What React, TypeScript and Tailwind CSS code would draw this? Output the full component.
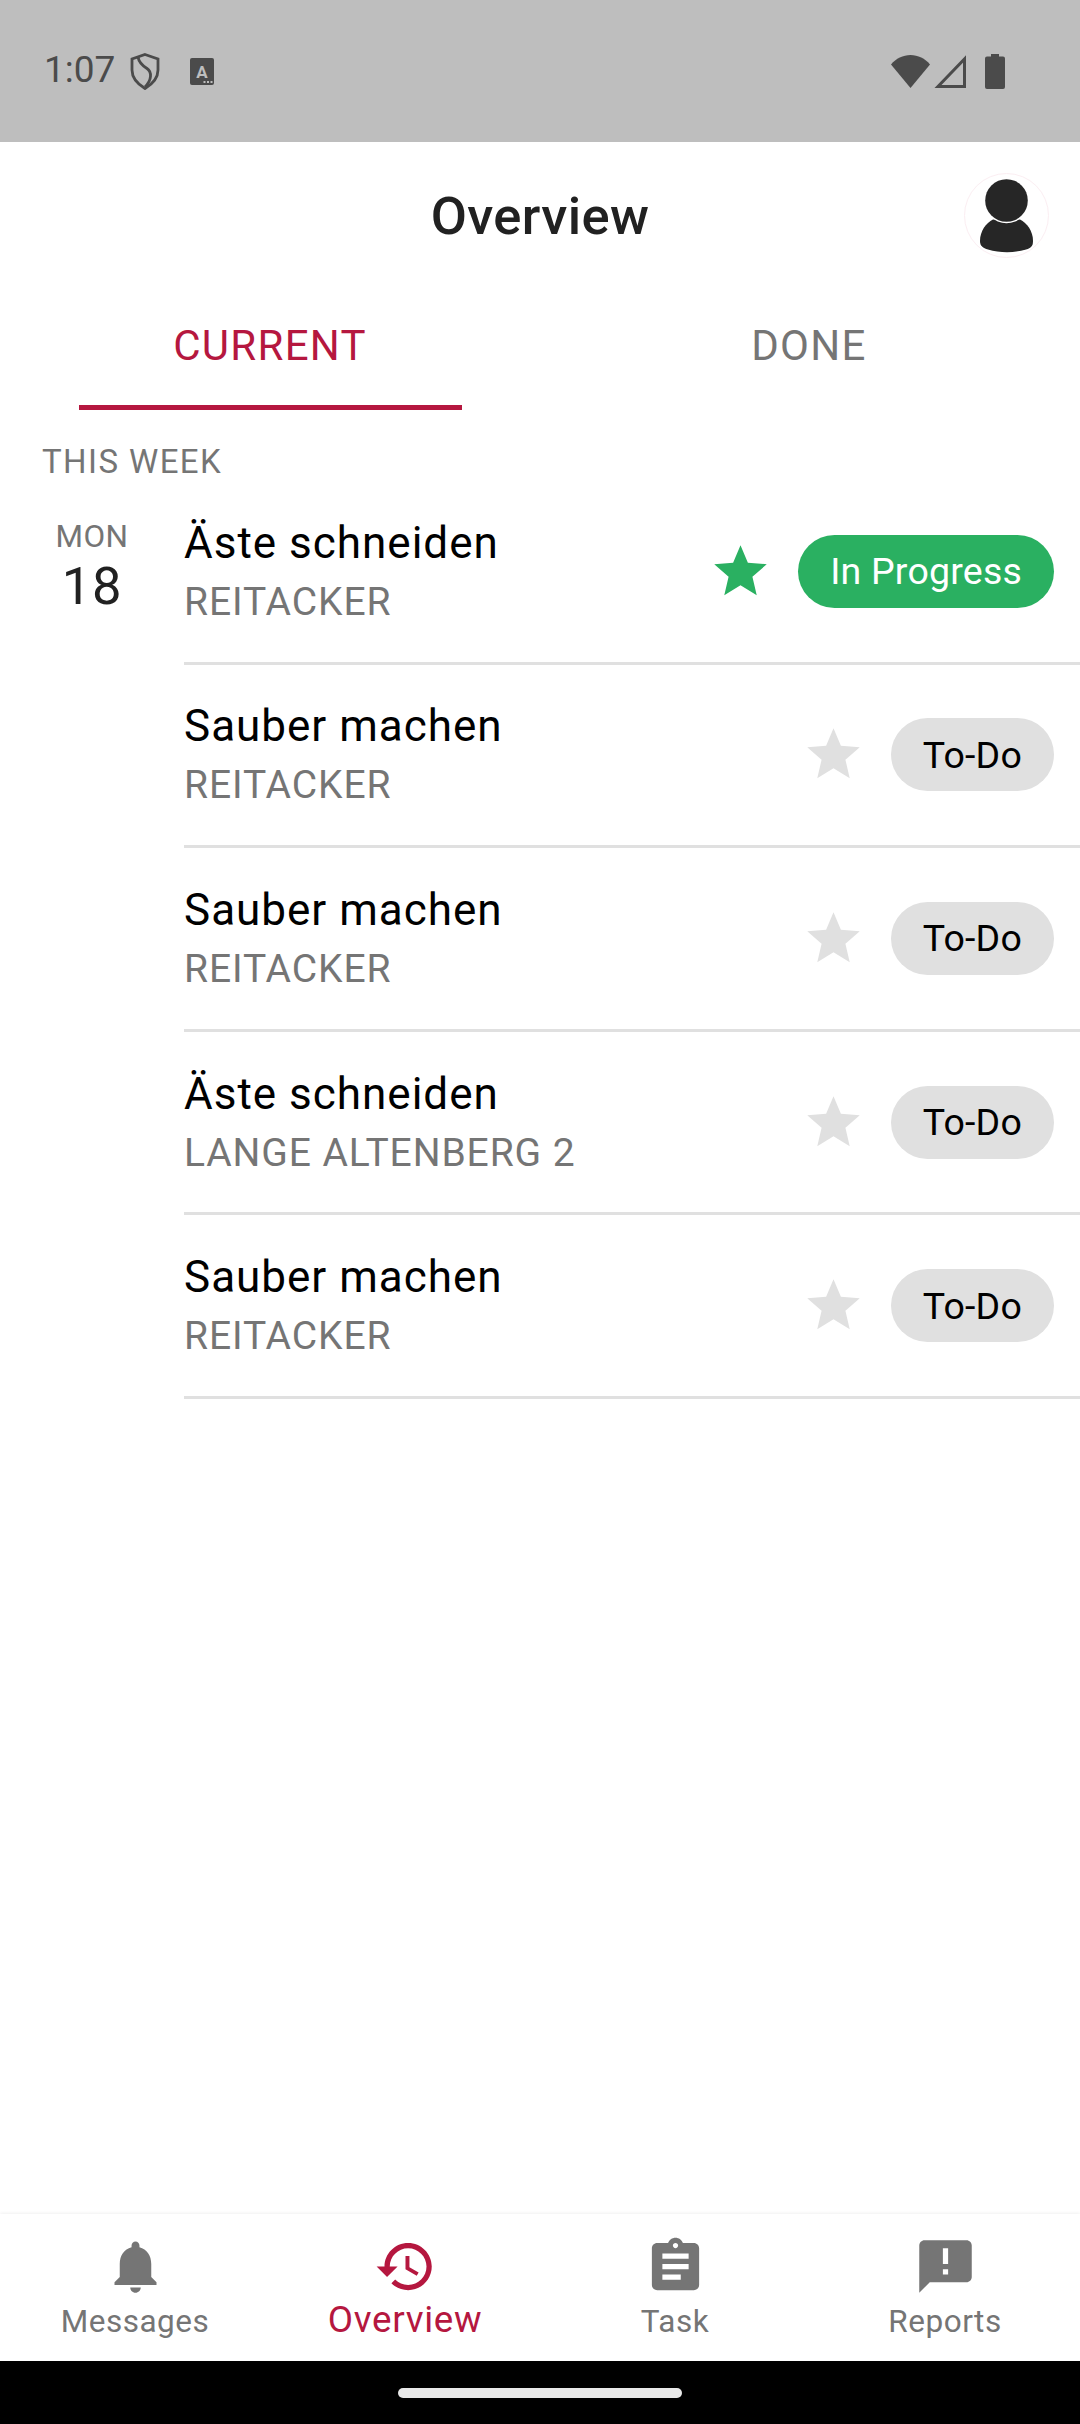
import React from 'react';

const FONT = "font-['Roboto',sans-serif]";

const tasks = [
  { title: 'Äste schneiden', place: 'REITACKER', active: true },
  { title: 'Sauber machen', place: 'REITACKER', active: false },
  { title: 'Sauber machen', place: 'REITACKER', active: false },
  { title: 'Äste schneiden', place: 'LANGE ALTENBERG 2', active: false },
  { title: 'Sauber machen', place: 'REITACKER', active: false },
];

const Star: React.FC<{ className: string }> = ({ className }) => (
  <svg viewBox="0 0 24 24" className={`w-[63px] h-[63px] ${className}`} fill="currentColor">
    <path d="M12 17.27L18.18 21l-1.64-7.03L22 9.24l-7.19-.61L12 2 9.19 8.63 2 9.24l5.46 4.73L5.82 21z" />
  </svg>
);

const navItems = [
  {
    label: 'Messages',
    d: 'M12 22c1.1 0 2-.9 2-2h-4c0 1.1.89 2 2 2zm6-6v-5c0-3.07-1.64-5.64-4.5-6.32V4c0-.83-.67-1.5-1.5-1.5s-1.5.67-1.5 1.5v.68C7.63 5.36 6 7.92 6 11v5l-2 2v1h16v-1l-2-2z',
  },
  {
    label: 'Overview',
    active: true,
    d: 'M13 3c-4.97 0-9 4.03-9 9H1l3.89 3.89.07.14L9 12H6c0-3.87 3.13-7 7-7s7 3.13 7 7-3.13 7-7 7c-1.93 0-3.68-.79-4.94-2.06l-1.42 1.42C8.27 19.99 10.51 21 13 21c4.97 0 9-4.03 9-9s-4.03-9-9-9zm-1 5v5l4.28 2.54.72-1.21-3.5-2.08V8H12z',
  },
  {
    label: 'Task',
    d: 'M19 3h-4.18C14.4 1.84 13.3 1 12 1c-1.3 0-2.4.84-2.82 2H5c-1.1 0-2 .9-2 2v14c0 1.1.9 2 2 2h14c1.1 0 2-.9 2-2V5c0-1.1-.9-2-2-2zm-7 0c.55 0 1 .45 1 1s-.45 1-1 1-1-.45-1-1 .45-1 1-1zm2 14H7v-2h7v2zm3-4H7v-2h10v2zm0-4H7V7h10v2z',
  },
  {
    label: 'Reports',
    d: 'M20 2H4c-1.1 0-1.99.9-1.99 2L2 22l4-4h14c1.1 0 2-.9 2-2V4c0-1.1-.9-2-2-2zm-7 9h-2V5h2v6zm0 4h-2v-2h2v2z',
  },
];

const StatusBar: React.FC = () => (
  <div className="h-[142px] shrink-0 bg-[#bebebe] flex items-center pl-[44px] pr-[75px] text-[#4b4b4b]">
    <span className="w-[70px] text-[37px] leading-[44px] -mt-[2px]">1:07</span>
    <svg viewBox="0 0 30 37" className="w-[30px] h-[37px] ml-[16px]" fill="none" stroke="currentColor" strokeWidth="2.8">
      <path d="M15 1.500l13 4.500v11c0 8-5.500 14-13 18.500C7.500 31 2 25 2 17V6z" />
      <path d="M8 4C9 10 13 13 17 15.500 22 19 22 27 15 34" />
    </svg>
    <svg viewBox="0 0 24 27" className="w-[24px] h-[27px] ml-[30px]">
      <rect width="24" height="27" rx="2" fill="currentColor" />
      <text x="12" y="20" textAnchor="middle" fontSize="17" fontWeight="700" fill="#bebebe">A</text>
      <path d="M13.500 23h2v2h-2zM17 23h2v2h-2zM20.500 23h2v2h-2z" fill="#bebebe" />
    </svg>
    <div className="flex-1" />
    <svg viewBox="0 0 39 33" className="w-[39px] h-[33px]" fill="currentColor">
      <path d="M0 9.500C5 3.500 12 0 19.500 0S34 3.500 39 9.500L19.500 33z" />
    </svg>
    <svg viewBox="0 0 32 33" className="w-[32px] h-[33px] ml-[4px]" fill="none" stroke="currentColor" strokeWidth="3">
      <path d="M30.500 4v27.500H4z" />
    </svg>
    <svg viewBox="0 0 20 35" className="w-[20px] h-[35px] ml-[19px]" fill="currentColor">
      <path d="M6 0h8v2.500h4a2 2 0 0 1 2 2V33a2 2 0 0 1-2 2H2a2 2 0 0 1-2-2V4.500a2 2 0 0 1 2-2h4z" />
    </svg>
  </div>
);

const App: React.FC = () => (
  <div className={`w-[1080px] h-[2424px] flex flex-col bg-white ${FONT}`}>
    <StatusBar />

    <header className="h-[147px] shrink-0 grid grid-cols-[1fr_auto_1fr] items-center">
      <div />
      <h1 className="text-[52.5px] leading-[62px] font-medium tracking-[0.4px] text-[#212121]">Overview</h1>
      <div className="flex justify-end pr-[31px]">
        <div className="w-[85px] h-[85px] rounded-full border border-[#fbeef2] flex items-center justify-center">
          <svg viewBox="0 0 54 74" className="w-[54px] h-[74px]" fill="#262626">
            <path d="M13 40.500C6 44 0 52 0 62c0 5 3 7 8 8.500 12 3.500 26 3.500 38 0 5-1.500 7-3.500 7-8.500 0-10-6-18-13-21.500z" />
            <circle cx="26.500" cy="21.500" r="22.800" fill="#ffffff" />
            <circle cx="26.500" cy="21.500" r="21.300" />
          </svg>
        </div>
      </div>
    </header>

    <nav className="h-[121px] shrink-0 flex">
      <div className="w-[540px] flex justify-center">
        <div className="w-[383px] flex flex-col items-center justify-end border-b-[5px] border-[#b5173f] pb-[34px]">
          <span className="text-[42px] leading-[50px] tracking-[1.3px] text-[#b5173f]">CURRENT</span>
        </div>
      </div>
      <div className="w-[540px] flex justify-center pr-[2px]">
        <div className="w-[383px] flex flex-col items-center justify-end border-b-[5px] border-transparent pb-[34px]">
          <span className="text-[42px] leading-[50px] tracking-[1.3px] text-[#757575]">DONE</span>
        </div>
      </div>
    </nav>

    <p className="mt-[32px] pl-[42px] text-[33px] leading-[39px] tracking-[1.4px] text-[#757575]">THIS WEEK</p>

    <main className="flex-1">
      {tasks.map((t, i) => (
        <div key={i} className="flex h-[183.6px]">
          <div className="w-[184px] shrink-0 flex flex-col items-center pt-[37px]">
            {i === 0 && (
              <>
                <span className="text-[31.5px] leading-[37px] tracking-[0.5px] text-[#757575]">MON</span>
                <span className="text-[52.5px] leading-[62px] tracking-[0.8px] text-[#212121]">18</span>
              </>
            )}
          </div>
          <div className="flex-1 flex items-center border-b-[3px] border-[#e0e0e0] pr-[26px]">
            <div className="flex-1 flex flex-col">
              <span className="text-[44px] leading-[50px] tracking-[1px] text-black">{t.title}</span>
              <span className="mt-[11px] text-[39px] leading-[46px] tracking-[0.9px] text-[#757575]">{t.place}</span>
            </div>
            <Star className={t.active ? 'text-[#2ab061]' : 'text-[#e0e0e0]'} />
            <span
              className={`ml-[26px] h-[73px] px-[32px] rounded-full flex items-center text-[37.5px] tracking-[0.2px] ${
                t.active ? 'bg-[#2ab061] text-white' : 'bg-[#e0e0e0] text-black'
              }`}
            >
              {t.active ? 'In Progress' : 'To-Do'}
            </span>
          </div>
        </div>
      ))}
    </main>

    <footer className="h-[147px] shrink-0 grid grid-cols-4 bg-white shadow-[0_-1px_3px_rgba(0,0,0,0.06)]">
      {navItems.map(item => (
        <div key={item.label} className={`flex flex-col items-center pt-[21px] ${item.active ? 'text-[#b5173f]' : 'text-[#757575]'}`}>
          <svg viewBox="0 0 24 24" className="w-[63px] h-[63px]" fill="currentColor">
            <path d={item.d} />
          </svg>
          <span className={item.active ? 'text-[36.75px] leading-[43px] tracking-[0.7px]' : 'text-[31.5px] leading-[37px] mt-[5px] tracking-[0.5px]'}>
            {item.label}
          </span>
        </div>
      ))}
    </footer>

    <div className="h-[63px] shrink-0 bg-black flex justify-center pt-[27px]">
      <div className="w-[284px] h-[10px] rounded-full bg-[#e8e8e8]" />
    </div>
  </div>
);

export default App;
